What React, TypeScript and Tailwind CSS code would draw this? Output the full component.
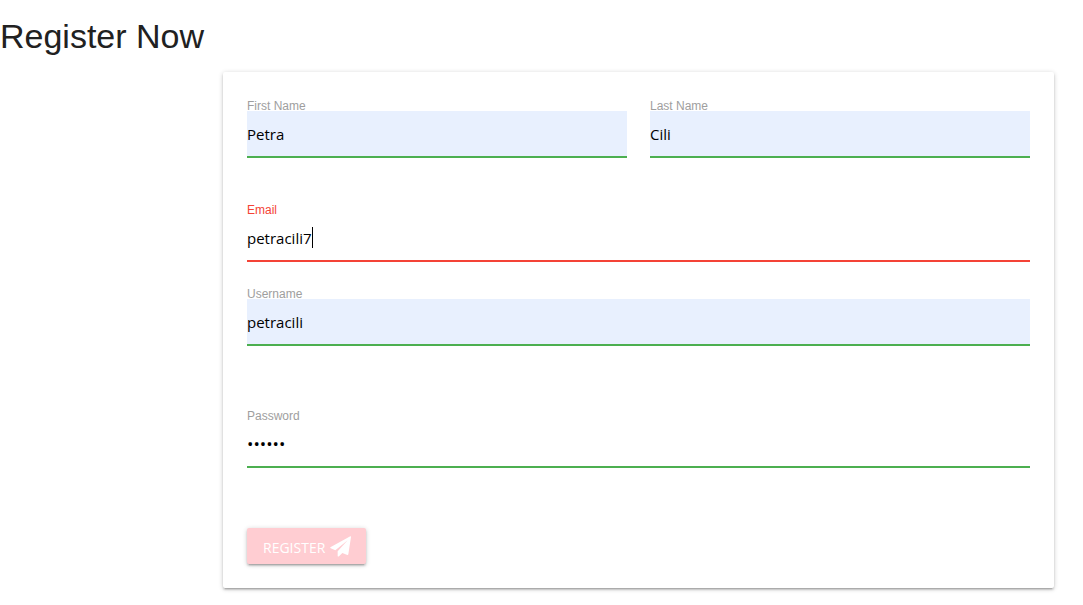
import { useState } from "react";

type FieldProps = {
  id: string;
  label: string;
  type?: string;
  initial: string;
  filled?: boolean;
  invalid?: boolean;
};

function Field({ id, label, type = "text", initial, filled = false, invalid = false }: FieldProps) {
  const [value, setValue] = useState(initial);
  return (
    <div className="relative flex min-w-0 flex-1 flex-col">
      <label
        htmlFor={id}
        className={`-mb-0.5 font-['Liberation_Sans',Arial,sans-serif] text-xs leading-[14px] ${invalid ? "text-[#f44336]" : "text-[#9e9e9e]"}`}
      >
        {label}
      </label>
      <input
        id={id}
        type={type}
        value={value}
        onChange={(event) => setValue(event.target.value)}
        className={`h-[47px] w-full rounded-none border-b-2 p-0 text-black outline-none ${type === "password" ? "text-[17px]" : "text-[15px]"} ${filled ? "bg-[#e8f0fe]" : "bg-transparent"} ${invalid ? "border-[#f44336]" : "border-[#4caf50]"}`}
      />
      {invalid && (
        <span aria-hidden="true" className="pointer-events-none absolute top-6 left-0 flex h-[21px] text-[15px]">
          <span className="invisible">{value}</span>
          <span className="w-px bg-black" />
        </span>
      )}
    </div>
  );
}

function PaperPlane() {
  return (
    <svg aria-hidden="true" viewBox="0 0 63 63" fill="currentColor" className="size-[21px]">
      <path d="M61 1 L1 34 Q0 36 2 37 L16 43 L53 13 L23 46 L23 60 Q24 63 27 61 L37 51 L52 57 Q54 58 55 55 L63 3 Q63 0 61 1 Z" />
    </svg>
  );
}

export default function App() {
  return (
    <main className="min-h-screen bg-white pt-4 pb-4 font-['Open_Sans','Noto_Sans',sans-serif]">
      <h1 className="font-['Liberation_Sans',Arial,sans-serif] text-[34px] leading-10 text-[#212121]">
        Register Now
      </h1>
      <form
        onSubmit={(event) => event.preventDefault()}
        className="mt-4 mr-[29px] ml-[223px] rounded-xs bg-white px-6 pt-[27px] pb-6 shadow-[0_2px_2px_0_rgba(0,0,0,0.14),0_3px_1px_-2px_rgba(0,0,0,0.12),0_1px_5px_0_rgba(0,0,0,0.2)]"
      >
        <div className="flex gap-[23px]">
          <Field id="first-name" label="First Name" initial="Petra" filled />
          <Field id="last-name" label="Last Name" initial="Cili" filled />
        </div>
        <div className="mt-[45px]">
          <Field id="email" label="Email" initial="petracili7" invalid />
        </div>
        <div className="mt-[25px]">
          <Field id="username" label="Username" initial="petracili" filled />
        </div>
        <div className="mt-[63px]">
          <Field id="password" label="Password" type="password" initial="secret" />
        </div>
        <button
          type="submit"
          className="mt-[60px] flex h-9 items-center gap-[5px] rounded-xs bg-[#ffcdd2] pr-[15px] pl-4 text-sm text-white uppercase shadow-[0_2px_2px_0_rgba(0,0,0,0.14),0_3px_1px_-2px_rgba(0,0,0,0.12),0_1px_5px_0_rgba(0,0,0,0.2)]"
        >
          <span className="pt-1">Register</span>
          <PaperPlane />
        </button>
      </form>
    </main>
  );
}
